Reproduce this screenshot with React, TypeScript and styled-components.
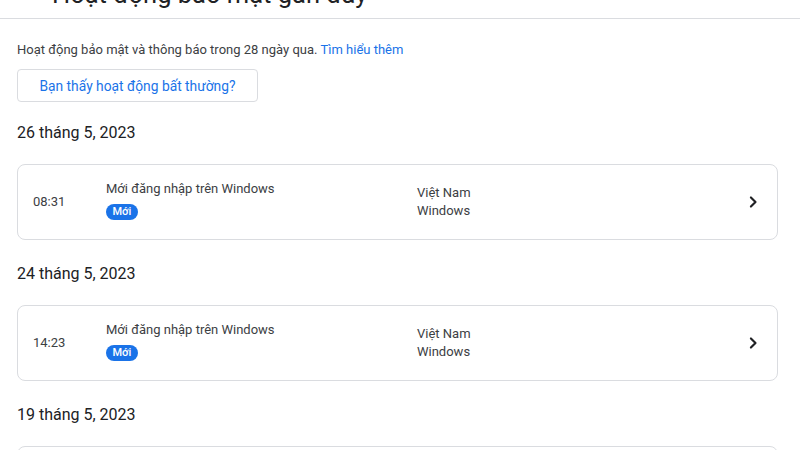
import React from "react";
import styled, { createGlobalStyle } from "styled-components";

const Global = createGlobalStyle`
  html, body { margin: 0; padding: 0; background: #fff; overflow: hidden; }
  body { font-family: Roboto, "Noto Sans", Arial, sans-serif; color: #202124; }
  * { box-sizing: border-box; }
`;

const Page = styled.div`
  width: 800px;
  height: 450px;
  overflow: hidden;
  display: flex;
  flex-direction: column;
`;

const Header = styled.header`
  height: 56px;
  margin-top: -37px;
  display: flex;
  align-items: center;
  gap: 16px;
  padding-left: 12px;
  border-bottom: 1px solid #dadce0;
  flex-shrink: 0;
`;

const BackButton = styled.span`
  width: 24px;
  height: 24px;
  margin-bottom: 5px;
  display: flex;
  align-items: center;
  justify-content: center;
  color: #5f6368;
`;

const Title = styled.h1`
  margin: 0;
  padding-top: 7px;
  font-size: 25.5px;
  font-weight: 400;
  line-height: 56px;
  color: #202124;
  white-space: nowrap;
`;

const Content = styled.main`
  padding: 21px 22px 0 17px;
  display: flex;
  flex-direction: column;
`;

const Description = styled.p`
  margin: 0;
  font-size: 13px;
  line-height: 20px;
  color: #3c4043;
`;

const Link = styled.a`
  color: #1a73e8;
  text-decoration: none;
`;

const OutlineButton = styled.button`
  margin-top: 9px;
  align-self: flex-start;
  width: 241px;
  height: 33px;
  border: 1px solid #dadce0;
  border-radius: 4px;
  background: #fff;
  color: #1a73e8;
  font-family: Roboto, Arial, sans-serif;
  font-size: 13.8px;
  font-weight: 400;
  cursor: pointer;
`;

const DateHeading = styled.h2<{ $first?: boolean }>`
  margin: 0;
  font-size: 16px;
  font-weight: 400;
  line-height: 24px;
  color: #202124;
  padding: ${(p) => (p.$first ? "19px 0 19px" : "22px 0 19px")};
`;

const Card = styled.div`
  height: 76px;
  border: 1px solid #dadce0;
  border-radius: 8px;
  display: flex;
  align-items: center;
  padding: 0 12px 0 15px;
  flex-shrink: 0;
`;

const Time = styled.div`
  width: 73px;
  font-size: 13px;
  line-height: 20px;
  color: #3c4043;
`;

const EventBlock = styled.div`
  width: 311px;
  display: flex;
  flex-direction: column;
  align-items: flex-start;
  padding-bottom: 6px;
`;

const EventTitle = styled.div`
  font-size: 13px;
  line-height: 20px;
  color: #3c4043;
`;

const Badge = styled.span`
  margin-top: 5px;
  height: 16px;
  padding: 0 6.5px;
  border-radius: 8px;
  background: #1a73e8;
  color: #fff;
  font-size: 11px;
  font-weight: 500;
  line-height: 16px;
`;

const Location = styled.div`
  flex: 1;
  font-size: 13px;
  line-height: 18px;
  color: #3c4043;
`;

const Chevron = styled.span`
  width: 24px;
  height: 24px;
  display: flex;
  align-items: center;
  justify-content: center;
  color: #202124;
`;

type Item = { date: string; time: string };

const items: Item[] = [
  { date: "26 tháng 5, 2023", time: "08:31" },
  { date: "24 tháng 5, 2023", time: "14:23" },
  { date: "19 tháng 5, 2023", time: "10:05" },
];

export default function App() {
  return (
    <Page>
      <Global />
      <Header>
        <BackButton>
          <svg width="24" height="24" viewBox="0 0 24 24" fill="currentColor">
            <path d="M20 11H7.83l5.59-5.59L12 4l-8 8 8 8 1.41-1.41L7.83 13H20v-2z" />
          </svg>
        </BackButton>
        <Title>Hoạt động bảo mật gần đây</Title>
      </Header>
      <Content>
        <Description>
          Hoạt động bảo mật và thông báo trong 28 ngày qua. <Link href="#">Tìm hiểu thêm</Link>
        </Description>
        <OutlineButton>Bạn thấy hoạt động bất thường?</OutlineButton>
        {items.map((it, i) => (
          <React.Fragment key={it.date}>
            <DateHeading $first={i === 0}>{it.date}</DateHeading>
            <Card>
              <Time>{it.time}</Time>
              <EventBlock>
                <EventTitle>Mới đăng nhập trên Windows</EventTitle>
                <Badge>Mới</Badge>
              </EventBlock>
              <Location>
                Việt Nam
                <br />
                Windows
              </Location>
              <Chevron>
                <svg width="20" height="20" viewBox="0 0 24 24" fill="none" stroke="currentColor" strokeWidth="2.6" strokeLinecap="round" strokeLinejoin="round">
                  <path d="M9.5 6.5l5.5 5.5-5.5 5.5" />
                </svg>
              </Chevron>
            </Card>
          </React.Fragment>
        ))}
      </Content>
    </Page>
  );
}
